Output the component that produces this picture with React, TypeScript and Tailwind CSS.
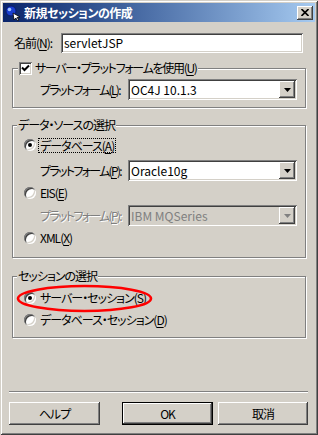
import React from "react";

const sunken = "shadow-[inset_1px_1px_0_#808080,inset_-1px_-1px_0_#ffffff,inset_2px_2px_0_#404040,inset_-2px_-2px_0_#d4d0c8]";
const raised = "shadow-[inset_-1px_-1px_0_#404040,inset_1px_1px_0_#ffffff,inset_-2px_-2px_0_#808080,inset_2px_2px_0_#d4d0c8]";
const etched = "border border-[#808080] shadow-[1px_1px_0_#ffffff,inset_1px_1px_0_#ffffff]";

function Mn({ children }: { children: React.ReactNode }) {
  return <span className="underline underline-offset-[2px]">{children}</span>;
}

function Radio({ checked }: { checked?: boolean }) {
  return (
    <span className={`relative w-[12px] h-[12px] rounded-full bg-white shrink-0 flex items-center justify-center ${sunken}`}>
      {checked && <span className="w-[4px] h-[4px] rounded-full bg-black"></span>}
    </span>
  );
}

function Checkbox() {
  return (
    <span className={`w-[13px] h-[13px] bg-white shrink-0 flex items-center justify-center ${sunken}`}>
      <svg width="9" height="9" viewBox="0 0 9 9">
        <path d="M1 3.5 L3.5 6 L8 1.5" stroke="#000" strokeWidth="2" fill="none" />
      </svg>
    </span>
  );
}

function Select({ value, disabled }: { value: string; disabled?: boolean }) {
  return (
    <div className={`w-[169px] h-[21px] shrink-0 flex items-center pl-[3px] pr-[2px] tracking-normal ${sunken} ${disabled ? "bg-[#d4d0c8] text-[#808080]" : "bg-white text-black"}`}>
      <span className="flex-1 leading-[16px]">{value}</span>
      <span className={`w-[16px] h-[17px] bg-[#d4d0c8] flex items-center justify-center ${raised}`}>
        <svg width="7" height="4" viewBox="0 0 7 4">
          <path d="M0 0 H7 L3.5 4 Z" fill={disabled ? "#808080" : "#000"} />
        </svg>
      </span>
    </div>
  );
}

function Button({ label, isDefault, width }: { label: string; isDefault?: boolean; width: string }) {
  return (
    <div className={`${width} h-[23px] ${isDefault ? "border border-black" : ""}`}>
      <div className={`w-full h-full flex items-center justify-center bg-[#d4d0c8] leading-[16px] ${raised}`}>{label}</div>
    </div>
  );
}

function PlatformLabel({ mn, disabled }: { mn: string; disabled?: boolean }) {
  return (
    <span className={`w-[87px] mr-[1px] shrink-0 leading-[16px] tracking-[-1.7px] ${disabled ? "text-[#808080] [text-shadow:1px_1px_0_#ffffff]" : ""}`}>
      プラットフォーム(<Mn>{mn}</Mn>):
    </span>
  );
}

export default function App() {
  return (
    <div className="w-[318px] h-[435px] bg-[#d4d0c8] p-[3px] flex flex-col whitespace-nowrap text-[12px] text-black font-['Noto_Sans_CJK_JP',sans-serif] [font-feature-settings:'palt'] tracking-[-1px] shadow-[inset_1px_1px_0_#d4d0c8,inset_-1px_-1px_0_#404040,inset_2px_2px_0_#ffffff,inset_-2px_-2px_0_#808080]">
      {/* title bar */}
      <div className="h-[19px] flex items-center bg-gradient-to-r from-[#0a246a] to-[#a6caf0]">
        <svg width="16" height="16" viewBox="0 0 16 16" className="ml-[2px]">
          <circle cx="6" cy="6" r="5" fill="#1a3fd0" stroke="#0a1a70" strokeWidth="1" />
          <circle cx="4.5" cy="4.5" r="1.8" fill="#9fc0ff" />
          <path d="M8 8 L15 12 L12 12.5 L14 15 L12.5 15.5 L10.8 13 L9 15 Z" fill="#fff" stroke="#000" strokeWidth="0.8" />
        </svg>
        <span className="ml-[3px] text-white font-bold leading-[16px] tracking-[-0.5px]">新規セッションの作成</span>
        <div className={`ml-auto mr-[2px] w-[16px] h-[14px] bg-[#d4d0c8] flex items-center justify-center ${raised}`}>
          <svg width="8" height="7" viewBox="0 0 8 7">
            <path d="M0.5 0 L7.5 7 M7.5 0 L0.5 7" stroke="#000" strokeWidth="1.6" />
          </svg>
        </div>
      </div>

      {/* name */}
      <div className="mt-[11px] flex items-center">
        <span className="ml-[11px] w-[47px] leading-[16px]">名前(<Mn>N</Mn>):</span>
        <div className={`w-[242px] h-[20px] bg-white flex items-center pl-[3px] tracking-normal ${sunken}`}>
          <span className="leading-[16px]">servletJSP</span>
        </div>
      </div>

      {/* server platform */}
      <fieldset className={`ml-[9px] w-[294px] mt-[7px] pb-[7px] min-w-0 ${etched}`}>
        <legend className="ml-[5px] px-[1px] bg-[#d4d0c8]">
          <span className="flex items-center h-[16px] gap-[3px]">
            <Checkbox />
            <span className="leading-[16px] tracking-[-1.3px]">サーバー・プラットフォームを使用(<Mn>U</Mn>)</span>
          </span>
        </legend>
        <div className="mt-[3px] flex items-center pl-[27px]">
          <PlatformLabel mn="L" />
          <Select value="OC4J 10.1.3" />
        </div>
      </fieldset>

      {/* data source */}
      <fieldset className={`ml-[9px] w-[294px] mt-[9px] pb-[11px] min-w-0 ${etched}`}>
        <legend className="ml-[4px] px-[1px] bg-[#d4d0c8] leading-[16px]">データ・ソースの選択</legend>
        <div className="mt-[4px] h-[16px] flex items-center pl-[11px]">
          <Radio checked />
          <span className="ml-[3px] px-[1px] leading-[13px] outline outline-1 outline-dotted outline-black">データベース(<Mn>A</Mn>)</span>
        </div>
        <div className="mt-[7px] flex items-center pl-[27px]">
          <PlatformLabel mn="P" />
          <Select value="Oracle10g" />
        </div>
        <div className="mt-[4px] h-[16px] flex items-center pl-[11px]">
          <Radio />
          <span className="ml-[4px] leading-[16px]">EIS(<Mn>E</Mn>)</span>
        </div>
        <div className="mt-[4px] flex items-center pl-[27px]">
          <PlatformLabel mn="P" disabled />
          <Select value="IBM MQSeries" disabled />
        </div>
        <div className="mt-[4px] h-[16px] flex items-center pl-[11px]">
          <Radio />
          <span className="ml-[4px] leading-[16px]">XML(<Mn>X</Mn>)</span>
        </div>
      </fieldset>

      {/* session */}
      <fieldset className={`ml-[9px] w-[294px] mt-[10px] pb-[9px] min-w-0 ${etched}`}>
        <legend className="ml-[4px] px-[1px] bg-[#d4d0c8] leading-[16px]">セッションの選択</legend>
        <div className="relative mt-[6px] h-[16px] flex items-center pl-[11px]">
          <Radio checked />
          <span className="ml-[4px] leading-[16px]">サーバー・セッション(<Mn>S</Mn>)</span>
          <svg width="137" height="29" viewBox="0 0 137 29" className="absolute left-[3px] top-[-6px] pointer-events-none">
            <ellipse cx="68.5" cy="14.5" rx="66.5" ry="12.5" fill="none" stroke="#ff0000" strokeWidth="2.6" />
          </svg>
        </div>
        <div className="mt-[6px] h-[16px] flex items-center pl-[11px]">
          <Radio />
          <span className="ml-[4px] leading-[16px]">データベース・セッション(<Mn>D</Mn>)</span>
        </div>
      </fieldset>

      <div className="flex-1"></div>

      {/* separator */}
      <div className="ml-[6px] w-[299px] h-[2px] border-t border-[#808080] border-b border-b-white"></div>

      {/* buttons */}
      <div className="mt-[9px] mb-[7px] flex items-center">
        <div className="ml-[6px]">
          <Button label="ヘルプ" width="w-[91px]" />
        </div>
        <div className="ml-[22px]">
          <Button label="OK" isDefault width="w-[91px]" />
        </div>
        <div className="ml-[5px]">
          <Button label="取消" width="w-[90px]" />
        </div>
      </div>
    </div>
  );
}
